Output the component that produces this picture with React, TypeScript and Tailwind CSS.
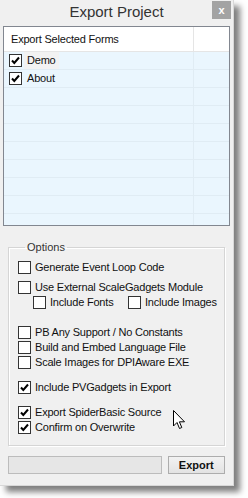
import React from 'react';

const font = { fontFamily: '"Liberation Sans", Arial, sans-serif' };

const Box: React.FC<{ checked?: boolean }> = ({ checked }) => (
  <span className="w-[13px] h-[13px] shrink-0 bg-white border border-[#333] flex items-center justify-center">
    {checked && (
      <svg width="9" height="9" viewBox="0 0 9 9">
        <path d="M1 4.5 L3.3 7 L8 1.5" stroke="#000" strokeWidth="2" fill="none" />
      </svg>
    )}
  </span>
);

const Opt: React.FC<{ label: string; checked?: boolean; className?: string }> = ({ label, checked, className }) => (
  <div className={`flex items-center gap-[4px] h-[15px] ${className ?? ''}`}>
    <Box checked={checked} />
    <span className="text-[11px] tracking-[-0.2px] leading-none text-[#111] whitespace-nowrap">{label}</span>
  </div>
);

const App: React.FC = () => {
  const rows = [
    { name: 'Demo', checked: true, hover: true },
    { name: 'About', checked: true },
    {}, {}, {}, {}, {}, {}, {}, {},
  ] as { name?: string; checked?: boolean; hover?: boolean }[];

  return (
    <div className="w-[248px] h-[498px] bg-white overflow-hidden" style={font}>
      <div className="relative w-[234px] h-[486px] bg-[#f0f0f0] border-r border-b border-[#d8d8d8] shadow-[6px_6px_6px_rgba(0,0,0,0.5)] flex flex-col">
        {/* title bar */}
        <div className="h-[26px] grid grid-cols-[40px_1fr_40px] items-start">
          <div />
          <div className="text-center text-[15px] text-[#333] pt-[1px]">Export Project</div>
          <div className="flex justify-end pr-[2px] pt-[1px]">
            <div className="w-[19px] h-[18px] bg-[#a3a3a3] text-white text-[11px] font-bold flex items-center justify-center">x</div>
          </div>
        </div>

        {/* forms list */}
        <div className="mx-[3px] h-[200px] border border-[#828790] bg-white overflow-hidden">
          <div className="grid grid-cols-[190px_1fr] h-[25px] border-b border-[#e5e5e5]">
            <div className="flex items-center pl-[7px] text-[11px] tracking-[-0.2px] text-[#111] border-r border-[#e5e5e5]">Export Selected Forms</div>
            <div />
          </div>
          {rows.map((r, i) => (
            <div key={i} className="grid grid-cols-[190px_1fr] h-[18px] bg-[#eaf6fe] border-b border-[#e0ecf4]">
              <div className="flex items-center pl-[5px] gap-[2px] border-r border-[#e0ecf4]">
                {r.name && (
                  <>
                    <Box checked={r.checked} />
                    <span className={`text-[11px] tracking-[-0.2px] text-[#111] px-[3px] h-[17px] flex items-center ${r.hover ? 'bg-[#f2f2f2]' : ''}`}>{r.name}</span>
                  </>
                )}
              </div>
              <div />
            </div>
          ))}
        </div>

        {/* options */}
        <fieldset className="min-w-0 overflow-hidden mx-[8px] mt-[14px] border border-[#d5d5d5] shadow-[inset_1px_1px_0_#fff,1px_1px_0_#fff] pl-[9px] pr-[4px] pt-[2px] pb-[11px] h-[206px]">
          <legend className="ml-[7px] px-[2px] text-[11px] text-[#333] leading-[14px]">Options</legend>
          <Opt label="Generate Event Loop Code" className="mt-[4px]" />
          <Opt label="Use External ScaleGadgets Module" className="mt-[5px]" />
          <div className="grid grid-cols-[95px_auto] ml-[15px]">
            <Opt label="Include Fonts" />
            <Opt label="Include Images" />
          </div>
          <Opt label="PB Any Support / No Constants" className="mt-[15px]" />
          <Opt label="Build and Embed Language File" />
          <Opt label="Scale Images for DPIAware EXE" />
          <Opt label="Include PVGadgets in Export" checked className="mt-[10px]" />
          <Opt label="Export SpiderBasic Source" checked className="mt-[10px]" />
          <Opt label="Confirm on Overwrite" checked />
        </fieldset>

        {/* bottom bar */}
        <div className="flex mx-[8px] mt-[10px] gap-[6px]">
          <div className="w-[155px] h-[18px] bg-[#e6e6e6] border border-[#bcbcbc]" />
          <button className="w-[58px] h-[18px] border border-[#adadad] bg-gradient-to-b from-[#f2f2f2] to-[#e3e3e3] text-[11px] font-bold text-[#111] leading-none">
            Export
          </button>
        </div>

        {/* mouse cursor */}
        <svg className="absolute left-[173px] top-[410px]" width="13" height="20" viewBox="0 0 13 20">
          <path d="M0.5 0.5 L0.5 16 L4 12.5 L6.5 18.5 L8.8 17.5 L6.4 11.8 L11.5 11.8 Z" fill="#fff" stroke="#000" strokeWidth="1" strokeLinejoin="round" />
        </svg>
      </div>
    </div>
  );
};

export default App;
